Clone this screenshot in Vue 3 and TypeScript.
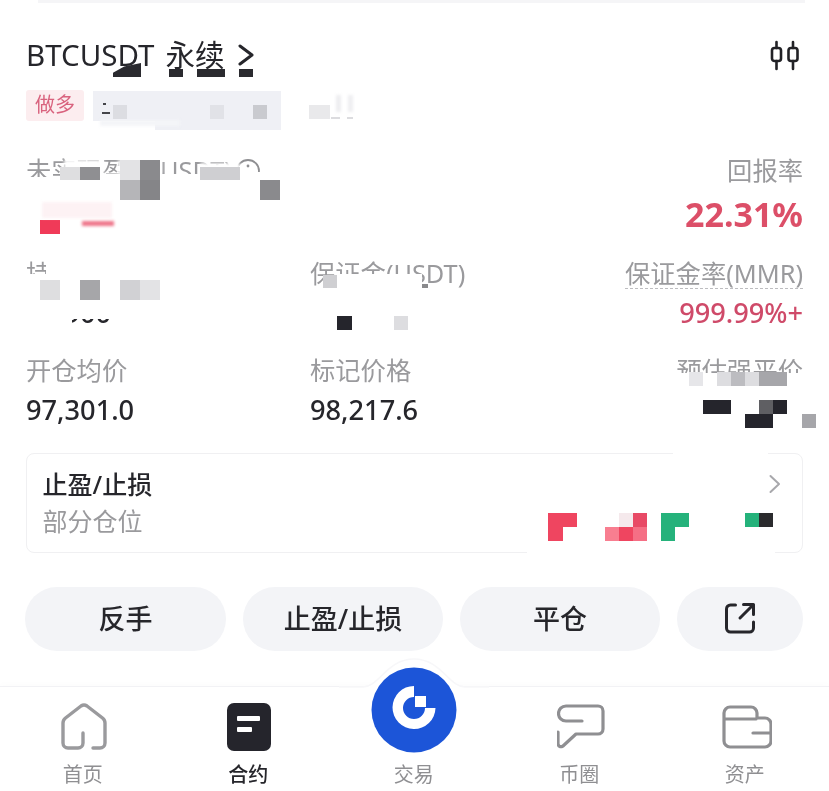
<script setup lang="ts">
interface Patch { x: number; y: number; w: number; h: number; c: string; soft?: boolean; corner?: boolean }

const patch = (x: number, y: number, w: number, h: number, c: string, soft = false): Patch => ({ x, y, w, h, c, soft })

const patches: Patch[] = [
  // white smudges that hide the private figures
  patch(60, 174, 222, 44, '#fff'),
  patch(26, 177, 60, 40, '#fff'),
  patch(64, 160, 40, 14, '#fff', true),
  patch(118, 160, 44, 14, '#fff', true),
  patch(200, 163, 40, 10, '#fff', true),
  patch(240, 172, 30, 12, '#fff'),
  patch(46, 256, 150, 24, '#fff'),
  patch(26, 274, 170, 45, '#fff'),
  patch(26, 315, 46, 14, '#fff'),
  patch(336, 274, 86, 14, '#fff'),
  patch(320, 288, 108, 44, '#fff'),
  patch(676, 373, 128, 16, '#fff'),
  patch(680, 389, 128, 38, '#fff'),
  patch(527, 548, 248, 8, '#fff'),
  patch(673, 450, 95, 7, '#fff'),
  // grey bar behind the size line
  patch(93, 91, 188, 30, '#eff0f5'),
  patch(155, 121, 126, 9, '#eff0f5'),
  patch(100, 120, 80, 6, '#f4f5f8', true),
  patch(113, 105, 14, 14, '#dcdde2'),
  patch(210, 105, 14, 14, '#e1e2e7'),
  patch(253, 105, 14, 14, '#c9cacf'),
  patch(103, 103, 3, 2, '#44454a'),
  patch(102, 112, 8, 2, '#44454a'),
  patch(309, 105, 21, 14, '#e9e9eb'),
  patch(336, 95, 5, 17, '#ededf0', true),
  patch(348, 95, 5, 17, '#eeeef1', true),
  patch(331, 117, 9, 2, '#dcdcdf'),
  patch(347, 117, 6, 2, '#dcdcdf'),
  // dark fragments under the title
  { ...patch(113, 63, 28, 14, '#2a2a2f'), corner: true },
  patch(169, 69, 14, 8, '#2a2a2f'),
  patch(197, 69, 28, 8, '#2a2a2f'),
  patch(239, 69, 14, 8, '#2a2a2f'),
  // unrealised PnL
  patch(60, 167, 20, 13, '#dedee0'),
  patch(80, 167, 20, 13, '#8f8f92'),
  patch(120, 160, 20, 20, '#e3e3e5'),
  patch(140, 160, 20, 20, '#8a8a8d'),
  patch(120, 180, 20, 20, '#b5b5b8'),
  patch(140, 180, 20, 20, '#858588'),
  patch(200, 167, 40, 13, '#cfcfd2'),
  patch(260, 180, 20, 20, '#8a8a8d'),
  patch(40, 220, 20, 14, '#f03a58'),
  patch(82, 221, 32, 5, '#ee7489', true),
  patch(42, 202, 70, 16, '#fdf2f4', true),
  // position size
  patch(40, 280, 20, 20, '#dedee0'),
  patch(80, 280, 20, 20, '#a6a6a9'),
  patch(120, 280, 20, 20, '#d1d1d4'),
  patch(140, 280, 20, 20, '#e3e3e5'),
  // margin
  patch(323, 275, 14, 13, '#cfcfd2'),
  patch(337, 316, 15, 14, '#25252c'),
  patch(394, 316, 14, 14, '#dddde0'),
  patch(422, 284, 6, 4, '#8a8a8d'),
  // liquidation price
  patch(689, 372, 14, 14, '#e6e6e9'),
  patch(717, 372, 14, 14, '#dddde0'),
  patch(731, 372, 14, 14, '#bcbcc0'),
  patch(745, 372, 14, 14, '#dddde0'),
  patch(759, 372, 28, 14, '#a6a6aa'),
  patch(703, 400, 28, 14, '#25252c'),
  patch(759, 400, 14, 14, '#5f5f63'),
  patch(773, 400, 14, 14, '#25252c'),
  patch(745, 414, 28, 14, '#25252c'),
  patch(802, 414, 14, 14, '#a6a6aa'),
  // take-profit card
  patch(548, 513, 29, 14, '#ef4560'),
  patch(548, 527, 15, 14, '#ef4560'),
  patch(619, 513, 14, 14, '#f5e9ec'),
  patch(633, 513, 14, 14, '#e84a66'),
  patch(605, 527, 14, 14, '#f87e90'),
  patch(619, 527, 14, 14, '#ef4560'),
  patch(633, 527, 14, 14, '#f56f85'),
  patch(661, 513, 28, 14, '#25b27b'),
  patch(661, 527, 14, 14, '#25b27b'),
  patch(745, 513, 14, 14, '#25b27b'),
  patch(759, 513, 14, 14, '#2b2b2e'),
]

const stats = [
  { label: '持仓量(BTC)', value: '10.900', align: 'left', tone: '', dashed: false },
  { label: '保证金(USDT)', value: '', align: 'left', tone: '', dashed: false },
  { label: '保证金率(MMR)', value: '999.99%+', align: 'right', tone: 'red', dashed: true },
  { label: '开仓均价', value: '97,301.0', align: 'left', tone: '', dashed: false },
  { label: '标记价格', value: '98,217.6', align: 'left', tone: '', dashed: false },
  { label: '预估强平价', value: '', align: 'right', tone: '', dashed: false },
]

const actions = ['反手', '止盈/止损', '平仓']
</script>

<template>
  <div class="screen">
    <div class="topline"></div>

    <main class="content">
      <header class="title-row">
        <h1 class="title">
          <span>BTCUSDT</span>
          <span class="title-cn">永续</span>
          <svg class="title-arrow" width="16" height="22" viewBox="0 0 16 22" fill="none">
            <path d="M2 2 L14 11 L2 20" stroke="#26262b" stroke-width="3" stroke-linecap="round" stroke-linejoin="round" />
          </svg>
        </h1>
        <svg class="candles" width="29" height="31" viewBox="0 0 29 31" fill="none" stroke="#222226" stroke-width="2.6" stroke-linecap="round">
          <rect x="2" y="8" width="9" height="13" rx="2.5" />
          <path d="M6.5 2V8M6.5 21V29" />
          <rect x="18.5" y="8" width="9" height="13" rx="2.5" />
          <path d="M23 2V8M23 21V29" />
        </svg>
      </header>

      <div class="tag-row"><span class="tag">做多</span></div>

      <section class="pnl">
        <div class="pnl-left">
          <span class="label">未实现盈亏(USDT)</span>
          <svg class="info" width="26" height="26" viewBox="0 0 26 26" fill="none">
            <circle cx="13" cy="13" r="11" stroke="#8f8f92" stroke-width="1.8" />
            <circle cx="13" cy="8" r="1.4" fill="#8f8f92" />
          </svg>
        </div>
        <div class="pnl-right">
          <span class="label">回报率</span>
          <strong class="roe">22.31%</strong>
        </div>
      </section>

      <section class="stats">
        <div v-for="s in stats" :key="s.label" class="stat" :class="s.align">
          <span class="label" :class="{ dashed: s.dashed }">{{ s.label }}</span>
          <span class="value" :class="s.tone">{{ s.value }}</span>
        </div>
      </section>

      <section class="card">
        <div class="card-text">
          <div class="card-title">止盈/止损</div>
          <div class="card-sub">部分仓位</div>
        </div>
        <svg class="card-arrow" width="12" height="20" viewBox="0 0 12 20" fill="none">
          <path d="M1.5 2 L10 10 L1.5 18" stroke="#a8a8ac" stroke-width="2" stroke-linecap="round" stroke-linejoin="round" />
        </svg>
      </section>

      <nav class="actions">
        <button v-for="a in actions" :key="a" class="action" type="button">{{ a }}</button>
        <button class="action share" type="button" aria-label="分享">
          <svg width="32" height="32" viewBox="0 0 32 32" fill="none" stroke="#26262b" stroke-width="3" stroke-linecap="round" stroke-linejoin="round">
            <path d="M11.5 3H6.5a4 4 0 0 0-4 4V26a4 4 0 0 0 4 4H25.5a4 4 0 0 0 4-4V20" />
            <path d="M16 16 L29 3M19.5 2.5H29.5V12.5" />
          </svg>
        </button>
      </nav>
    </main>

    <footer class="tabbar">
      <div class="tab">
        <svg class="home" width="46" height="48" viewBox="0 0 46 48" fill="none" stroke="#9a9a9d" stroke-width="3.4" stroke-linecap="round" stroke-linejoin="round">
          <path d="M32 45H39a5 5 0 0 0 5-5V20q0-3-2.500-5L26 3q-3-2-6 0L4.500 15Q2 17 2 20V40a5 5 0 0 0 5 5H17a5 5 0 0 0 5-5V30" />
        </svg>
        <span>首页</span>
      </div>
      <div class="tab active">
        <svg class="contract" width="44" height="48" viewBox="0 0 44 48">
          <rect width="44" height="48" rx="7" fill="#25252c" />
          <rect x="10" y="13" width="23" height="5" rx="1" fill="#fff" />
          <rect x="10" y="24" width="15" height="5" rx="1" fill="#fff" />
        </svg>
        <span>合约</span>
      </div>
      <div class="tab trade">
        <span class="trade-label">交易</span>
      </div>
      <div class="tab">
        <svg class="bubble" width="48" height="46" viewBox="0 0 48 46" fill="none" stroke="#8f8f92" stroke-width="3.2" stroke-linecap="round" stroke-linejoin="round">
          <path d="M25 17H9a7.500 7.500 0 0 1 0-15H41a5 5 0 0 1 5 5V25a5 5 0 0 1-5 5H19L6 42q-4 2-5-2V28" />
        </svg>
        <span>币圈</span>
      </div>
      <div class="tab">
        <svg class="wallet" width="50" height="44" viewBox="0 0 50 44" fill="none" stroke="#8f8f92" stroke-width="3.2" stroke-linecap="round" stroke-linejoin="round">
          <path d="M2 14V8a6 6 0 0 1 6-6H29a6 6 0 0 1 6 6V13H43a6 6 0 0 1 6 6V36a6 6 0 0 1-6 6H8a6 6 0 0 1-6-6V14H34" />
          <path d="M31 28H49" />
        </svg>
        <span>资产</span>
      </div>
    </footer>

    <svg class="bump" width="150" height="34" viewBox="0 0 150 34" fill="none">
      <path d="M0 32H24C40 32 48 4 75 4S110 32 126 32H150V34H0Z" fill="#fff" />
      <path d="M0 32H24C40 32 48 4 75 4S110 32 126 32H150" stroke="#f7f7f9" stroke-width="1.500" />
    </svg>

    <svg class="trade-btn" width="86" height="86" viewBox="0 0 86 86">
      <circle cx="43" cy="43" r="42.500" fill="#1c55d8" />
      <path d="M43 19A21.500 21.500 0 1 0 64.500 41H54A11 11 0 1 1 43 30Z" fill="#fff" />
      <rect x="44" y="29" width="11" height="11" fill="#fff" />
    </svg>

    <i
      v-for="(p, i) in patches"
      :key="i"
      class="patch"
      :class="{ soft: p.soft, corner: p.corner }"
      :style="{ left: p.x + 'px', top: p.y + 'px', width: p.w + 'px', height: p.h + 'px', background: p.c }"
    ></i>
  </div>
</template>

<style scoped>
.screen {
  position: relative;
  width: 829px;
  height: 791px;
  overflow: hidden;
  background: #fff;
  color: #26262b;
  font-family: "Noto Sans", "Noto Sans CJK SC", sans-serif;
  filter: blur(0.4px);
}
.topline {
  height: 3px;
  margin: 0 24px 0 38px;
  background: #f5f5f7;
}
.content {
  padding: 0 26px;
}
.title-row {
  display: flex;
  align-items: center;
  justify-content: space-between;
  height: 32px;
  margin-top: 36px;
}
.title {
  display: flex;
  align-items: center;
  margin: 0;
  font-size: 29.5px;
  font-weight: 400;
  line-height: 32px;
}
.title-cn {
  margin-left: 11px;
}
.title-arrow {
  margin-left: 14px;
}
.candles {
  margin-right: 4px;
}
.tag-row {
  margin-top: 19px;
  height: 31px;
}
.tag {
  display: inline-block;
  width: 58px;
  height: 31px;
  border-radius: 3px;
  background: #fcedef;
  color: #d9637e;
  font-size: 20px;
  line-height: 30px;
  text-align: center;
}
.label {
  color: #9a9a9d;
  font-size: 25.3px;
  line-height: 30px;
  white-space: nowrap;
}
.pnl {
  display: flex;
  justify-content: space-between;
  margin-top: 34px;
}
.pnl-left {
  display: flex;
  align-items: flex-start;
  height: 30px;
}
.info {
  margin: 3px 0 0 3px;
}
.pnl-right {
  display: flex;
  flex-direction: column;
  align-items: flex-end;
}
.roe {
  margin-top: 13px;
  color: #dc4f68;
  font-size: 34px;
  font-weight: 700;
  line-height: 32px;
}
.stats {
  display: grid;
  grid-template-columns: 284px 1fr auto;
  row-gap: 27px;
  margin-top: 28px;
}
.stat {
  display: flex;
  flex-direction: column;
  align-items: flex-start;
}
.stat.right {
  align-items: flex-end;
}
.value {
  height: 30px;
  margin-top: 10px;
  font-size: 27.2px;
  font-weight: 500;
  line-height: 30px;
}
.value.red {
  color: #cf4a69;
}
.dashed {
  border-bottom: 1px dashed #bdbdc0;
  margin-bottom: -1px;
}
.card {
  display: flex;
  align-items: flex-start;
  justify-content: space-between;
  box-sizing: border-box;
  height: 100px;
  margin-top: 28px;
  padding: 14px 21px 0 15.5px;
  border: 1.5px solid #f0f0f2;
  border-radius: 8px;
}
.card-title {
  font-size: 25px;
  font-weight: 500;
  line-height: 32px;
}
.card-sub {
  margin-top: 5px;
  color: #9a9a9d;
  font-size: 25px;
  line-height: 32px;
}
.card-arrow {
  margin-top: 6px;
}
.actions {
  display: grid;
  grid-template-columns: 201px 200px 200px 126px;
  column-gap: 17px;
  margin: 34px 0 0 -1px;
}
.action {
  height: 64px;
  padding: 0 0 3px;
  border: 0;
  border-radius: 32px;
  background: #f3f4f7;
  color: #26262b;
  font-family: inherit;
  font-size: 27px;
  font-weight: 500;
}
.share {
  display: flex;
  align-items: center;
  justify-content: center;
}
.tabbar {
  display: grid;
  grid-template-columns: repeat(5, 165.5px);
  height: 105px;
  margin-top: 35px;
  border-top: 1.5px solid #f2f2f5;
  box-shadow: 0 -3px 6px rgba(0, 0, 0, 0.012);
}
.tab {
  display: flex;
  flex-direction: column;
  align-items: center;
  height: 104px;
  padding-top: 16px;
  box-sizing: border-box;
  color: #8f8f92;
  font-size: 20px;
}
.tab svg {
  flex: none;
  height: 48px;
}
.tab .home {
  margin-left: 2px;
}
.tab .contract {
  margin-left: 2px;
}
.tab .bubble {
  margin-left: 3px;
}
.tab .wallet {
  margin-left: 4px;
}
.tab span {
  position: absolute;
  top: 760px;
  line-height: 30px;
}
.tab.active {
  color: #26262b;
  font-weight: 500;
}
.bump {
  position: absolute;
  left: 339px;
  top: 655px;
}
.trade-btn {
  position: absolute;
  left: 371px;
  top: 667px;
}
.patch {
  position: absolute;
  display: block;
}
.patch.soft {
  filter: blur(1.5px);
}
.patch.corner {
  clip-path: polygon(0 100%, 0 70%, 40% 25%, 100% 0, 100% 100%);
}
</style>
